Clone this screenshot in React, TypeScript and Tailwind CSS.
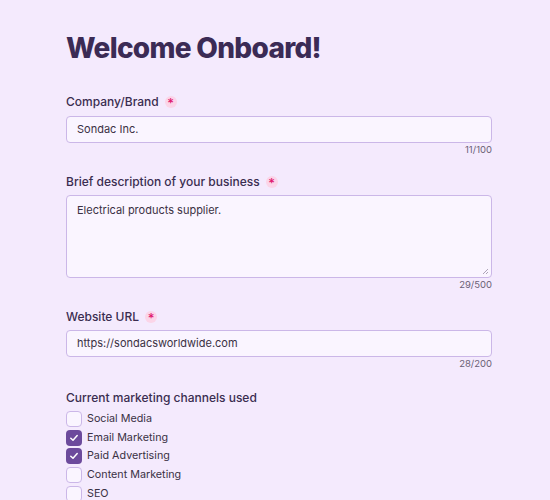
import React from 'react'

const font = { fontFamily: 'Inter, "Noto Sans", sans-serif' }

function Required() {
  return (
    <span className="ml-[6px] inline-flex h-[12px] w-[12px] items-center justify-center rounded-full bg-[#fbd5e8] text-[13px] leading-none text-[#e0196f]">
      <span className="mt-[3px]">*</span>
    </span>
  )
}

function Label({ text, required }: { text: string; required?: boolean }) {
  return (
    <div className="flex items-center text-[12px] font-medium leading-[16px] text-[#3a2d50]">
      {text}
      {required && <Required />}
    </div>
  )
}

function Counter({ value }: { value: string }) {
  return <div className="mt-[1px] text-right text-[9.5px] leading-[12px] text-[#6b6176]">{value}</div>
}

const channels = [
  { name: 'Social Media', checked: false },
  { name: 'Email Marketing', checked: true },
  { name: 'Paid Advertising', checked: true },
  { name: 'Content Marketing', checked: false },
  { name: 'SEO', checked: false },
]

export default function App() {
  return (
    <div className="h-[500px] w-[550px] overflow-hidden bg-[#f4eafd]" style={font}>
      <div className="ml-[66px] w-[426px] pt-[29px]">
        <h1 className="text-[28px] font-extrabold leading-[38px] tracking-[-0.7px] text-[#3b2b55]">Welcome Onboard!</h1>

        <div className="mt-[27px]">
          <Label text="Company/Brand" required />
          <div className="mt-[6px] flex h-[27px] items-center rounded-[4px] border border-[#cbb7e8] bg-[#faf5ff] px-[10px] text-[11px] text-[#3a3144]">
            Sondac Inc.
          </div>
          <Counter value="11/100" />
        </div>

        <div className="mt-[18px]">
          <Label text="Brief description of your business" required />
          <div className="relative mt-[5px] h-[83px] rounded-[4px] border border-[#cbb7e8] bg-[#faf5ff] px-[10px] pt-[6px] text-[11px] leading-[16px] text-[#3a3144]">
            Electrical products supplier.
            <svg className="absolute bottom-[2px] right-[2px]" width="7" height="7" viewBox="0 0 7 7">
              <path d="M6 1L1 6M6 4L4 6" stroke="#9a90a6" strokeWidth="0.8" />
            </svg>
          </div>
          <Counter value="29/500" />
        </div>

        <div className="mt-[18px]">
          <Label text="Website URL" required />
          <div className="mt-[5px] flex h-[27px] items-center rounded-[4px] border border-[#cbb7e8] bg-[#faf5ff] px-[10px] text-[11px] text-[#3a3144]">
            https://sondacsworldwide.com
          </div>
          <Counter value="28/200" />
        </div>

        <div className="mt-[20px]">
          <Label text="Current marketing channels used" />
          <div className="mt-[5px] flex flex-col gap-[2.7px]">
            {channels.map((c) => (
              <div key={c.name} className="flex items-center gap-[5px] text-[10.75px] leading-[16px] text-[#3a3144]">
                {c.checked ? (
                  <span className="flex h-[16px] w-[16px] items-center justify-center rounded-[4px] bg-[#6c4a9c]">
                    <svg width="10" height="10" viewBox="0 0 10 10" fill="none">
                      <path d="M1.8 5.2L4 7.3L8.2 2.6" stroke="white" strokeWidth="1.5" strokeLinecap="round" strokeLinejoin="round" />
                    </svg>
                  </span>
                ) : (
                  <span className="h-[16px] w-[16px] rounded-[4px] border border-[#cbb7e8] bg-[#faf5ff]" />
                )}
                <span>{c.name}</span>
              </div>
            ))}
          </div>
        </div>
      </div>
    </div>
  )
}
